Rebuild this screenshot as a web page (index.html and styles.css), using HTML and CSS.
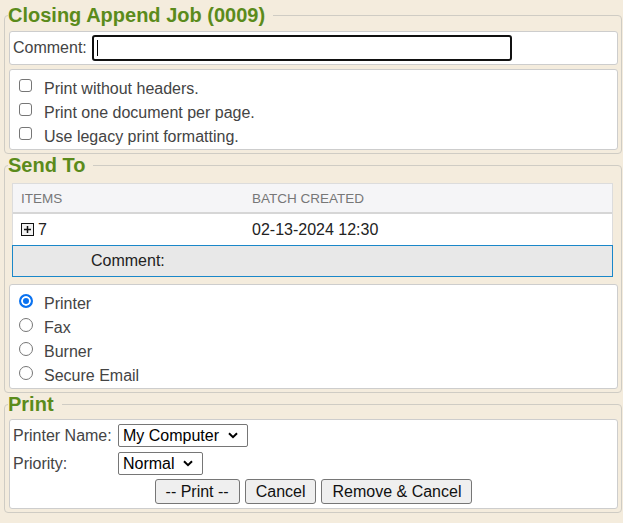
FILE: index.html
```html
<!DOCTYPE html>
<html>
<head>
<meta charset="utf-8">
<link rel="stylesheet" href="styles.css">
</head>
<body>
<fieldset class="group first">
  <legend>Closing Append Job (0009)</legend>
  <div class="panel comment-panel">
    <label class="lbl" for="c">Comment:</label>
    <span class="input-wrap"><input id="c" class="comment-input" type="text"></span>
  </div>
  <div class="panel options">
    <label class="opt"><input type="checkbox" class="chk"> Print without headers.</label>
    <label class="opt"><input type="checkbox" class="chk"> Print one document per page.</label>
    <label class="opt"><input type="checkbox" class="chk"> Use legacy print formatting.</label>
  </div>
</fieldset>

<fieldset class="group">
  <legend>Send To</legend>
  <div class="grid">
    <div class="grid-head">
      <div class="cell">ITEMS</div>
      <div class="cell">BATCH CREATED</div>
    </div>
    <div class="grid-row">
      <div class="cell"><svg class="expander" width="13" height="13" viewBox="0 0 13 13"><rect x="0.5" y="0.5" width="12" height="12" fill="#f2f2f2" stroke="#111"/><rect x="3" y="5.75" width="7" height="1.5" fill="#111"/><rect x="5.75" y="3" width="1.5" height="7" fill="#111"/></svg>7</div>
      <div class="cell">02-13-2024 12:30</div>
    </div>
    <div class="grid-comment">Comment:</div>
  </div>
  <div class="panel options radios">
    <label class="opt"><input type="radio" name="dest" class="rad" checked> Printer</label>
    <label class="opt"><input type="radio" name="dest" class="rad"> Fax</label>
    <label class="opt"><input type="radio" name="dest" class="rad"> Burner</label>
    <label class="opt"><input type="radio" name="dest" class="rad"> Secure Email</label>
  </div>
</fieldset>

<fieldset class="group">
  <legend>Print</legend>
  <div class="panel print-panel">
    <div class="form-grid">
      <span class="lbl">Printer Name:</span>
      <span><select class="sel"><option>My Computer</option></select></span>
      <span class="lbl">Priority:</span>
      <span><select class="sel"><option>Normal</option></select></span>
    </div>
    <div class="buttons">
      <button class="btn">-- Print --</button>
      <button class="btn">Cancel</button>
      <button class="btn">Remove &amp; Cancel</button>
    </div>
  </div>
</fieldset>
</body>
</html>
```

FILE: styles.css
```css
html, body {
  margin: 0;
  padding: 0;
  background: #f4ecdd;
  font-family: "Liberation Sans", Arial, sans-serif;
  font-size: 16px;
}
body {
  padding: 5px 1px 0 4px;
}
.group {
  margin: 1px 0 0 0;
  padding: 5px 3px 3px 4px;
  border: 1px solid #cfccc4;
  border-radius: 4px;
  min-width: 0;
}
.group.first {
  margin-top: 0;
}
.group legend {
  font-size: 20px;
  line-height: 20px;
  font-weight: bold;
  color: #5b8b1b;
  padding: 0 8px 0 0;
  margin-left: -1px;
}
.panel {
  background: #fff;
  border: 1px solid #cdcdcd;
  border-radius: 3px;
}
.comment-panel {
  margin-top: 1px;
  display: flex;
  align-items: center;
  padding: 3px;
  gap: 5px;
}
.lbl {
  color: #444;
  font-size: 16px;
}
.input-wrap {
  position: relative;
  display: block;
}
.input-wrap::after {
  content: "";
  position: absolute;
  left: 5px;
  top: 5px;
  width: 1px;
  height: 16px;
  background: #000;
}
.comment-input {
  box-sizing: border-box;
  display: block;
  width: 420px;
  height: 26px;
  margin: 0;
  border: 2px solid #111;
  border-radius: 3px;
  outline: none;
  font: 16px "Liberation Sans", Arial, sans-serif;
  padding: 0 3px;
}
.options {
  margin-top: 4px;
  padding: 7px 3px 0 3px;
  display: flex;
  flex-direction: column;
}
.opt {
  display: flex;
  align-items: flex-start;
  height: 24px;
  line-height: 24px;
  color: #444;
}
.chk {
  appearance: none;
  -webkit-appearance: none;
  box-sizing: border-box;
  width: 13px;
  height: 13px;
  margin: 2px 12px 0 6px;
  border: 1px solid #767676;
  border-radius: 3px;
  background: #fff;
}
.grid {
  margin: 3px 5px 0 3px;
  border: 1px solid #dcdcdc;
  border-bottom: none;
}
.grid-head, .grid-row {
  display: grid;
  grid-template-columns: 231px 1fr;
  align-items: center;
}
.grid-head {
  height: 28px;
  background: #f5f5f7;
  border-bottom: 2px solid #d6d6d6;
  color: #777;
  font-size: 13.5px;
}
.grid-row {
  height: 31px;
  background: #fff;
  color: #222;
}
.cell {
  padding-left: 8px;
  display: flex;
  align-items: center;
}
.expander {
  margin-right: 4px;
}
.grid-comment {
  box-sizing: border-box;
  height: 32px;
  margin: 0 -1px;
  border: 1px solid #1a87c9;
  background: #e8e8e8;
  color: #222;
  padding-left: 78px;
  display: flex;
  align-items: center;
}
.radios {
  margin-top: 7px;
  padding: 7px 3px 0 3px;
}
.rad {
  appearance: none;
  -webkit-appearance: none;
  box-sizing: border-box;
  width: 14px;
  height: 14px;
  margin: 2px 11px 0 6px;
  border: 1px solid #767676;
  border-radius: 50%;
  background: #fff;
}
.rad:checked {
  border: 2px solid #0a72f0;
  background: #0a72f0;
  box-shadow: inset 0 0 0 2px #fff;
}
.print-panel {
  padding: 4px 3px 4px 3px;
}
.form-grid {
  display: grid;
  grid-template-columns: 105px auto;
  row-gap: 5px;
  align-items: center;
  justify-items: start;
}
.sel {
  appearance: none;
  -webkit-appearance: none;
  box-sizing: border-box;
  height: 23px;
  font: 16px "Liberation Sans", Arial, sans-serif;
  color: #000;
  background: #fff url("data:image/svg+xml;utf8,<svg xmlns='http://www.w3.org/2000/svg' width='10' height='7' viewBox='0 0 10 7'><path d='M1 1.2 L5 5.2 L9 1.2' fill='none' stroke='black' stroke-width='2'/></svg>") no-repeat right 9px center;
  border: 1px solid #767676;
  border-radius: 2px;
  margin: 0;
  padding: 0 27px 0 4px;
  display: block;
}
.buttons {
  margin-top: 4px;
  display: flex;
  justify-content: center;
  gap: 5px;
}
.btn {
  height: 25px;
  margin: 0;
  padding: 0 10px;
  font: 16px "Liberation Sans", Arial, sans-serif;
  color: #111;
  background: #efefef;
  border: 1px solid #767676;
  border-radius: 3px;
}
```
